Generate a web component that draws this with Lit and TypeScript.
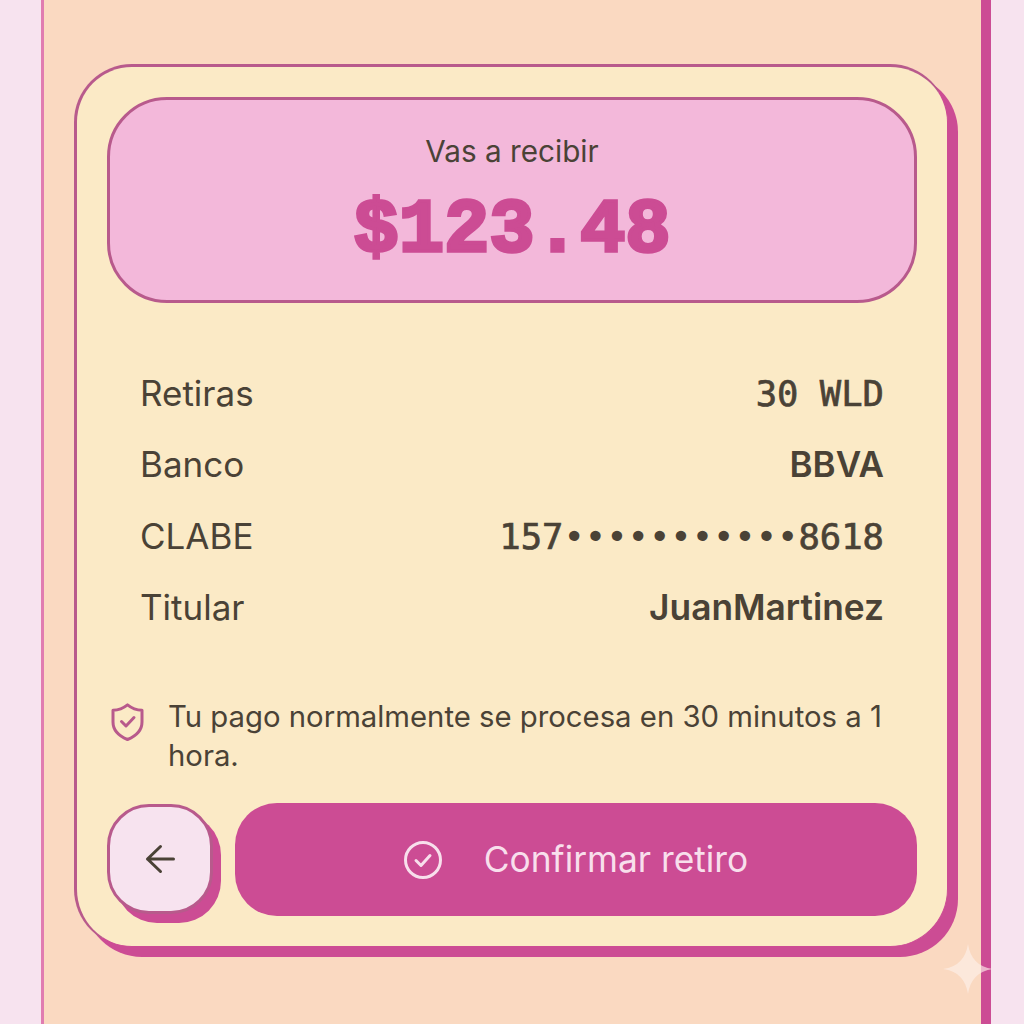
import { LitElement, html, css } from "lit";
import { customElement } from "lit/decorators.js";

const rows = [
  { label: "Retiras", value: html`30 WLD`, cls: "mono" },
  { label: "Banco", value: html`BBVA`, cls: "bold bank" },
  {
    label: "CLABE",
    value: html`157<span class="dots">•••••••••••</span>8618`,
    cls: "mono",
  },
  { label: "Titular", value: html`JuanMartinez`, cls: "bold" },
];

@customElement("app-root")
export class AppRoot extends LitElement {
  static styles = css`
    :host {
      display: block;
      height: 1024px;
      overflow: hidden;
      background: #f7e3ef;
      font-family: Inter, "Liberation Sans", sans-serif;
      color: #4a4236;
      position: relative;
    }
    .phone {
      box-sizing: border-box;
      margin-left: 41px;
      width: 950px;
      height: 1024px;
      padding: 64px 0 0 30px;
      background: #fad9c1;
      border-left: 3px solid #e07cb0;
      border-right: 10px solid #cc4c94;
    }
    .card {
      box-sizing: border-box;
      width: 874px;
      height: 883px;
      padding: 30px 30px 0 30px;
      background: #fbeac6;
      border: 3px solid #b85a8c;
      border-right: 1px solid #cc4c94;
      border-bottom: 1px solid #cc4c94;
      border-radius: 58px;
      box-shadow: 10px 10px 0 #cc4c94;
    }
    .hero {
      box-sizing: border-box;
      height: 206px;
      padding-top: 31px;
      display: flex;
      flex-direction: column;
      align-items: center;
      background: #f3b8da;
      border: 3px solid #b85a8c;
      border-radius: 60px;
    }
    .hero-label {
      font-size: 29.7px;
      line-height: 40px;
    }
    .amount {
      margin-top: 18px;
      font-family: "Liberation Mono", monospace;
      font-weight: 700;
      font-size: 75.5px;
      line-height: 84px;
      color: #cc4c94;
      -webkit-text-stroke: 3.5px #cc4c94;
    }
    .rows {
      margin-top: 54px;
      padding: 0 33px;
      display: grid;
      grid-auto-rows: 71.5px;
    }
    .row {
      display: flex;
      justify-content: space-between;
      align-items: center;
      font-size: 35px;
    }
    .mono {
      padding-top: 2px;
      font-family: "DejaVu Sans Mono", monospace;
      font-size: 35.5px;
      -webkit-text-stroke: 0.7px #4a4236;
    }
    .dots {
      -webkit-text-stroke: 0;
    }
    .bold {
      font-size: 35.3px;
      font-weight: 600;
    }
    .bank {
      font-size: 35px;
    }
    .note {
      margin-top: 54px;
      padding-left: 4px;
      display: flex;
      gap: 24px;
      font-size: 29.3px;
      line-height: 39px;
    }
    .note svg {
      flex: none;
      margin-top: 6px;
    }
    .actions {
      margin-top: 28px;
      display: flex;
      gap: 22px;
    }
    .back {
      box-sizing: border-box;
      flex: none;
      width: 106px;
      height: 110px;
      margin-top: 1px;
      display: flex;
      align-items: center;
      justify-content: center;
      background: #f7e3ef;
      border: 3px solid #b85a8c;
      border-radius: 42px;
      box-shadow: 8px 9px 0 #cc4c94;
    }
    .confirm {
      flex: 1;
      height: 113px;
      display: flex;
      align-items: center;
      justify-content: center;
      gap: 42px;
      background: #cc4c94;
      border-radius: 42px;
      color: #f8dfec;
      font-size: 35.3px;
    }
    .sparkle {
      position: absolute;
      left: 943px;
      top: 944px;
    }
  `;

  render() {
    return html`
      <div class="phone">
        <div class="card">
          <div class="hero">
            <div class="hero-label">Vas a recibir</div>
            <div class="amount">$123.48</div>
          </div>
          <div class="rows">
            ${rows.map(
              (r) => html`<div class="row">
                <span>${r.label}</span><span class=${r.cls}>${r.value}</span>
              </div>`
            )}
          </div>
          <div class="note">
            <svg width="33" height="38" viewBox="0 0 33 38" fill="none" stroke="#b85a8c" stroke-width="3" stroke-linecap="round" stroke-linejoin="round">
              <path d="M16.5 1.8C20.5 5 25.5 7 31 7.2V19C31 27.5 25 33 16.5 36.5C8 33 2 27.5 2 19V7.2C7.5 7 12.5 5 16.5 1.8Z" />
              <path d="M10.5 18.5L15 23L23 14.5" />
            </svg>
            <span>Tu pago normalmente se procesa en 30 minutos a 1 hora.</span>
          </div>
          <div class="actions">
            <div class="back">
              <svg width="30" height="30" viewBox="0 0 30 30" fill="none" stroke="#4a4236" stroke-width="3" stroke-linecap="round" stroke-linejoin="round">
                <path d="M28.5 15H2.5M15.5 2.5L2.5 15L15.5 27.5" />
              </svg>
            </div>
            <div class="confirm">
              <svg width="38" height="38" viewBox="0 0 38 38" fill="none" stroke="#f8dfec" stroke-width="3" stroke-linecap="round" stroke-linejoin="round">
                <circle cx="19" cy="19" r="17.5" />
                <path d="M12 19.5L17 24.5L26 14.5" />
              </svg>
              <span>Confirmar retiro</span>
            </div>
          </div>
        </div>
      </div>
      <svg class="sparkle" width="50" height="50" viewBox="0 0 50 50">
        <path d="M25 0C27 14 35 23 50 25C35 27 27 36 25 50C23 36 15 27 0 25C15 23 23 14 25 0Z" fill="#fdf0ea" fill-opacity="0.65" />
      </svg>
    `;
  }
}
